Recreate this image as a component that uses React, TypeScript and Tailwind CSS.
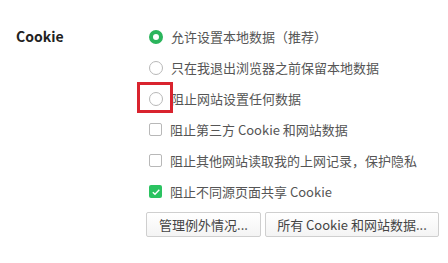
import React from "react";

const OPTIONS = [
  { type: "radio", label: "允许设置本地数据（推荐）", checked: true },
  { type: "radio", label: "只在我退出浏览器之前保留本地数据", checked: false },
  { type: "radio", label: "阻止网站设置任何数据", checked: false, marked: true },
  { type: "check", label: "阻止第三方 Cookie 和网站数据", checked: false },
  { type: "check", label: "阻止其他网站读取我的上网记录，保护隐私", checked: false },
  { type: "check", label: "阻止不同源页面共享 Cookie", checked: true },
] as const;

function Radio({ checked }: { checked: boolean }) {
  return checked ? (
    <span className="box-border h-[14px] w-[14px] shrink-0 rounded-full border-[4px] border-[#2bb55c] bg-white" />
  ) : (
    <span className="box-border h-[14px] w-[14px] shrink-0 rounded-full border border-[#b8b8b8] bg-white" />
  );
}

function Check({ checked }: { checked: boolean }) {
  return checked ? (
    <span className="flex h-[13px] w-[13px] shrink-0 items-center justify-center rounded-[2px] bg-[#2bc361]">
      <svg width="10" height="10" viewBox="0 0 10 10">
        <path d="M1.8 5.2 L4 7.3 L8.3 2.8" fill="none" stroke="white" strokeWidth="1.4" />
      </svg>
    </span>
  ) : (
    <span className="box-border h-[13px] w-[13px] shrink-0 rounded-[2px] border border-[#b8b8b8] bg-white" />
  );
}

export default function App() {
  return (
    <div
      className="flex h-[263px] w-[448px] bg-white text-[13px] text-[#555]"
      style={{ fontFamily: '"Noto Sans CJK SC", "Noto Sans", sans-serif' }}
    >
      <div className="w-[146px] shrink-0 pl-4 pt-[21px]">
        <div className="flex h-[31px] items-center text-[14px] font-bold text-[#222]">Cookie</div>
      </div>
      <div className="flex flex-col pt-[21px]">
        {OPTIONS.map((o) => (
          <div key={o.label} className="relative flex h-[31px] items-center gap-2 pl-[3px]">
            {o.type === "radio" ? <Radio checked={o.checked} /> : <Check checked={o.checked} />}
            <span className="whitespace-nowrap">{o.label}</span>
            {"marked" in o && o.marked && (
              <span className="absolute left-[-9px] top-[-1px] box-border h-[31px] w-[36px] border-[3px] border-[#d9232e]" />
            )}
          </div>
        ))}
        <div className="mt-[5px] flex gap-1">
          <button className="h-[25px] w-[115px] rounded-[2px] border border-[#cfcfcf] bg-gradient-to-b from-white to-[#f4f4f4] text-[13px] text-[#444]">
            管理例外情况...
          </button>
          <button className="h-[25px] w-[174px] rounded-[2px] border border-[#cfcfcf] bg-gradient-to-b from-white to-[#f4f4f4] text-[13px] text-[#444]">
            所有 Cookie 和网站数据...
          </button>
        </div>
      </div>
    </div>
  );
}
